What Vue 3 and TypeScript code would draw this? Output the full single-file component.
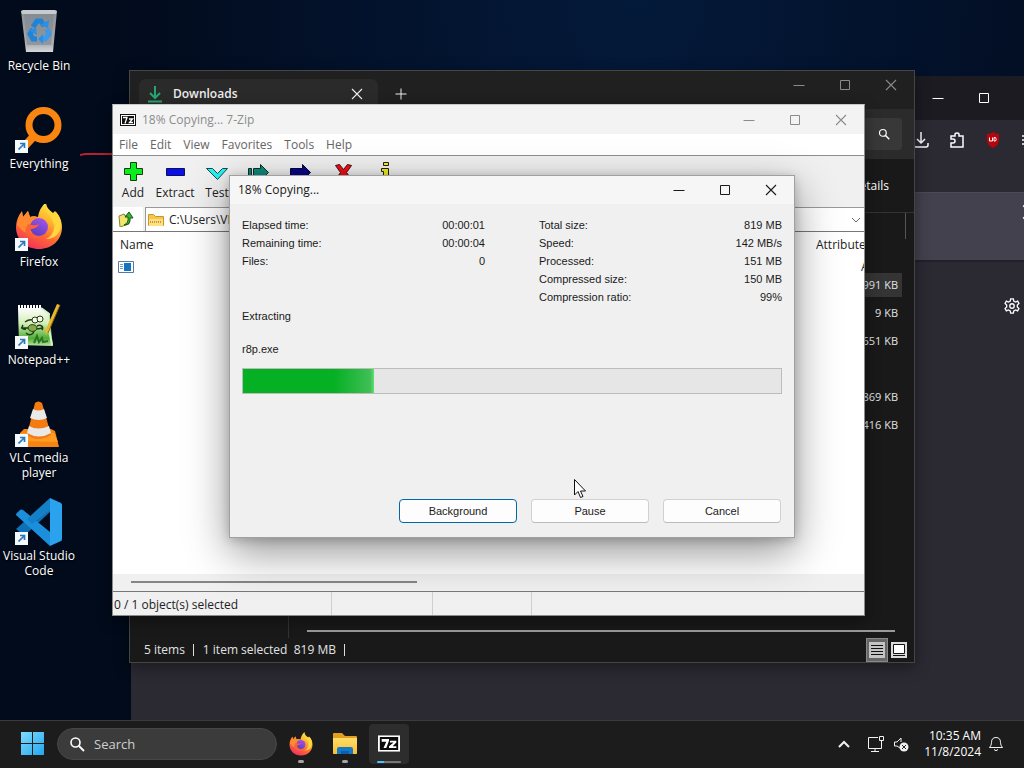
<script setup lang="ts">
import { ref } from 'vue'

interface Shortcut { id: string; label: string }
interface Stat { label: string; value: string }
interface Tool { id: string; name: string; caption: boolean }

const shortcuts: Shortcut[] = [
  { id: 'bin', label: 'Recycle Bin' },
  { id: 'everything', label: 'Everything' },
  { id: 'firefox', label: 'Firefox' },
  { id: 'notepad', label: 'Notepad++' },
  { id: 'vlc', label: 'VLC media player' },
  { id: 'code', label: 'Visual Studio Code' },
]
const menus: string[] = ['File', 'Edit', 'View', 'Favorites', 'Tools', 'Help']
const tools: Tool[] = [
  { id: 'add', name: 'Add', caption: true },
  { id: 'extract', name: 'Extract', caption: true },
  { id: 'test', name: 'Test', caption: true },
  { id: 'copy', name: 'Copy', caption: false },
  { id: 'move', name: 'Move', caption: false },
  { id: 'delete', name: 'Delete', caption: false },
  { id: 'info', name: 'Info', caption: false },
]
const leftStats: Stat[] = [
  { label: 'Elapsed time:', value: '00:00:01' },
  { label: 'Remaining time:', value: '00:00:04' },
  { label: 'Files:', value: '0' },
]
const rightStats: Stat[] = [
  { label: 'Total size:', value: '819 MB' },
  { label: 'Speed:', value: '142 MB/s' },
  { label: 'Processed:', value: '151 MB' },
  { label: 'Compressed size:', value: '150 MB' },
  { label: 'Compression ratio:', value: '99%' },
]
const sizes: string[] = ['991 KB', '9 KB', '651 KB', '', '869 KB', '416 KB']
const path = ref('C:\\Users\\VM')
const query = ref('')
</script>

<template>
  <main class="screen">
    <svg width="0" height="0" class="defs" aria-hidden="true">
      <defs>
        <linearGradient id="gFox" x1="0.8" y1="0" x2="0.3" y2="1">
          <stop offset="0" stop-color="#fff04a" /><stop offset="0.35" stop-color="#ffb62e" />
          <stop offset="0.65" stop-color="#ff6a35" /><stop offset="1" stop-color="#f0305c" />
        </linearGradient>
        <linearGradient id="gGlobe" x1="0.8" y1="0" x2="0.2" y2="1">
          <stop offset="0" stop-color="#a455e8" /><stop offset="1" stop-color="#5a3cc0" />
        </linearGradient>
        <linearGradient id="gBin" x1="0" y1="0" x2="0" y2="1">
          <stop offset="0" stop-color="#8d9298" /><stop offset="0.8" stop-color="#a9adb2" /><stop offset="1" stop-color="#d5d7da" />
        </linearGradient>
        <linearGradient id="gNote" x1="0" y1="0" x2="0" y2="1">
          <stop offset="0" stop-color="#fdfdfd" /><stop offset="0.4" stop-color="#d4efb8" /><stop offset="0.8" stop-color="#4fae35" /><stop offset="1" stop-color="#bfe6a8" />
        </linearGradient>
        <linearGradient id="gWin" x1="0" y1="0" x2="1" y2="1">
          <stop offset="0" stop-color="#7fdcfb" /><stop offset="1" stop-color="#22a6f0" />
        </linearGradient>
        <linearGradient id="gFolder" x1="0" y1="0" x2="0" y2="1">
          <stop offset="0" stop-color="#ffdc6b" /><stop offset="1" stop-color="#fbbf2c" />
        </linearGradient>
        <symbol id="fox" viewBox="0 0 48 48">
          <path d="M24 47C11 47 1 38 1 25c0-6 2-11 6-16l1 6 5-6 2 6c3-1 5-1 8 0 1-7 4-11 8-15 0 5 3 8 7 11l2-2c5 5 7 11 7 16 0 13-10 22-23 22z" fill="url(#gFox)" />
          <path d="M2 23c1-6 3-10 5-13l1 5 5-6 2 6c3-1 6-1 8 1l-3 4c-5 2-4 8-3 12l-8-2z" fill="#ff8a30" />
          <circle cx="24" cy="25" r="9" fill="url(#gGlobe)" />
          <path d="M13 22c3 1 7 2 11 0-1 3-5 5-9 5 1 6 5 8 10 8-6 3-14 0-15-7z" fill="#ff6038" />
          <path d="M30 1c-1 9 8 13 9 22 1 6-3 12-8 14 9 0 15-6 15-15 0-5-2-9-5-12l-2 2C35 9 30 7 30 1z" fill="#ffd63c" />
        </symbol>
        <symbol id="seven" viewBox="0 0 24 18">
          <path d="M0 0h24v18H0z" fill="#fff" /><path d="M2 2h20v14H2z" fill="#0b0b0b" />
          <path d="M4 4h8v2L9 14H6l3-7H4z" fill="#fff" />
          <path d="M13 6h7v2l-4 4h4v2h-8v-2l5-4h-4z" fill="#fff" />
        </symbol>
        <symbol id="min" viewBox="0 0 12 12"><path d="M0.500 6.500h11" stroke="currentColor" /></symbol>
        <symbol id="max" viewBox="0 0 12 12"><path d="M1.500 1.500h9v9h-9z" fill="none" stroke="currentColor" /></symbol>
        <symbol id="close" viewBox="0 0 12 12"><path d="M1 1l10 10M11 1L1 11" stroke="currentColor" stroke-width="1.100" /></symbol>
        <symbol id="glass" viewBox="0 0 16 16"><circle cx="6.500" cy="6.500" r="4.500" fill="none" stroke="currentColor" stroke-width="1.600" /><path d="M10 10l5 5" stroke="currentColor" stroke-width="1.800" /></symbol>
      </defs>
    </svg>

    <section class="desktop">
      <svg class="scribble" viewBox="0 0 34 4" aria-hidden="true"><path d="M1 3l5-1h28" fill="none" stroke="#b81f31" stroke-width="2" /></svg>

      <nav class="shortcuts" aria-label="Desktop">
        <button v-for="s in shortcuts" :key="s.id" type="button" class="shortcut">
          <svg viewBox="0 0 48 48" class="big" aria-hidden="true">
            <g v-if="s.id === 'bin'">
              <path d="M6 3h36l-4 41H11z" fill="url(#gBin)" /><path d="M6 3l2-1h32l2 1-1 3H7z" fill="#c8cbce" />
              <path d="M9 6h30l-3 31H12z" fill="#7d858d" opacity="0.550" />
              <g fill="none" stroke="#1f83d8" stroke-width="5"><path d="M18 19l4-6h4l3 5" /><path d="M32 21l2 5-4 5h-4" stroke="#3a9bea" /><path d="M22 31h-4l-3-5 3-5" /></g>
              <path d="M25 17l8 3 1-8zM28 26l-5 5 5 5zM13 22l8-2 1 7z" fill="#2b8fe3" />
            </g>
            <g v-else-if="s.id === 'everything'">
              <circle cx="28.500" cy="19" r="14.500" fill="none" stroke="#fb8511" stroke-width="7" /><path d="M20 29L7 43" stroke="#fb8511" stroke-width="8" />
            </g>
            <use v-else-if="s.id === 'firefox'" href="#fox" y="-2" />
            <g v-else-if="s.id === 'notepad'">
              <path d="M3 6h24l7 5 4 33-34-1z" fill="url(#gNote)" />
              <path d="M3 5h24" stroke="#fff" stroke-width="4" stroke-dasharray="2 1" />
              <path d="M26 6l8 6-1 10 4 21" stroke="#d7f4c5" stroke-width="2" fill="none" />
              <path d="M10 20c4-3 7-3 10-1M6 26h8l4-2 4 3 6-1M11 31c3 3 7 2 8-2M8 23c-2 3 0 5 3 4M22 24c4-2 7 1 5 4" fill="none" stroke="#243c17" stroke-width="1.500" />
              <circle cx="20" cy="18" r="3" fill="#f7fbe9" stroke="#243c17" /><circle cx="25" cy="17" r="3" fill="#f7fbe9" stroke="#243c17" />
              <path d="M13 26c0-4 8-5 9 0 0 4-8 5-9 0z" fill="#86a94c" stroke="#243c17" />
              <path d="M19 41l3-7 2 6 3-4 1 4 5-1" fill="none" stroke="#2e7422" stroke-width="2" />
              <path d="M45 3L34 28l-3 5-1-4L42 2z" fill="#e9b92c" /><path d="M45 3L33 31" stroke="#8b6512" />
            </g>
            <g v-else-if="s.id === 'vlc'">
              <path d="M5 33l4-4h27l4 2 4 16H7z" fill="#f58410" /><path d="M7 41l-2-8h34l4 9z" fill="#ff9a23" />
              <path d="M20 3q3-3 7 0l9 32q-13 8-24 0z" fill="#f47b12" />
              <path d="M18 9q5 3 11 0l3 9q-8 4-17 0zM14 26q9 5 20 0l2 7q-12 7-24 0z" fill="#e9e9ea" />
            </g>
            <g v-else>
              <path d="M35 1v13L9 38l-8-7z" fill="#0e70b6" /><path d="M1 17q0-2 2-3l2-2q1-1 3 0l27 22v14z" fill="#1b8fdb" />
              <path d="M35 0l11 5q1 1 1 2v34q0 2-1 2l-11 5z" fill="#2aa2ee" /><path d="M35 0v12L17 26l-5-5z" fill="#1480c8" />
            </g>
            <g v-if="s.id !== 'bin'">
              <path d="M0 34h13v13H0z" fill="#f7fafc" /><path d="M3.500 43.500L9 38M5 37.500h4.500V42" fill="none" stroke="#2878bd" stroke-width="1.700" />
            </g>
          </svg>
          <span>{{ s.label }}</span>
        </button>
      </nav>

      <section class="window browser" aria-label="Browser">
        <div class="browser-title">
          <button type="button" class="ctl" aria-label="Minimize"><svg><use href="#min" /></svg></button>
          <button type="button" class="ctl" aria-label="Maximize"><svg><use href="#max" /></svg></button>
        </div>
        <div class="browser-bar">
          <button type="button" aria-label="Downloads"><svg viewBox="0 0 16 16"><path d="M8 0v10M4 7l4 4 4-4M1 11v2q0 2 2 2h10q2 0 2-2v-2" /></svg></button>
          <button type="button" aria-label="Extensions"><svg viewBox="0 0 16 16"><path d="M2 15V11h2q2 0 2-2T4 7H2V4h4V2.500Q6 1 8 1t2 1.500V4h4v11z" /></svg></button>
          <button type="button" aria-label="uBlock"><svg viewBox="0 0 16 16" class="shield"><path d="M8 0q3 2 6 2v6q0 5-6 8-6-3-6-8V2q3 0 6-2z" fill="#b5050d" stroke="none" /><path d="M4.500 5.500V9h3V5.500M9 5.500V9h1.500q1.500-1.500 0-3.500z" /></svg></button>
          <button type="button" class="edge" aria-label="Menu"><svg viewBox="0 0 16 16"><path d="M1 4h14M1 8h14M1 12h14" /></svg></button>
        </div>
        <div class="browser-panel"><svg viewBox="0 0 12 12"><path d="M1 1l10 10M11 1L1 11" /></svg></div>
        <div class="browser-page">
          <button type="button" aria-label="Settings"><svg viewBox="0 0 18 18"><path d="M7.500 1h3l.5 2.500 2 1 2.300-.9 1.500 2.600L15 8v2l1.800 1.800-1.500 2.600-2.300-.9-2 1-.5 2.500h-3L7 14.500l-2-1-2.300.9-1.500-2.600L3 10V8L1.200 6.200l1.500-2.600 2.300.9 2-1z" /><circle cx="9" cy="9" r="2.500" /></svg></button>
        </div>
      </section>

      <section class="window explorer" aria-label="Downloads">
        <div class="ex-title">
          <div class="ex-tab">
            <svg class="dl" viewBox="0 0 16 18" aria-hidden="true"><path d="M8 1v11M3 8l5 5 5-5M1 16.500h14" fill="none" stroke="#27a675" stroke-width="2" /></svg>
            <strong>Downloads</strong>
            <button type="button" aria-label="Close tab"><svg viewBox="0 0 12 12"><use href="#close" /></svg></button>
          </div>
          <button type="button" class="plus" aria-label="New tab"><svg viewBox="0 0 12 12"><path d="M6 0.500v11M0.500 6h11" stroke="currentColor" /></svg></button>
          <div class="controls">
            <button type="button" class="ctl" aria-label="Minimize"><svg><use href="#min" /></svg></button>
            <button type="button" class="ctl" aria-label="Maximize"><svg><use href="#max" /></svg></button>
            <button type="button" class="ctl" aria-label="Close"><svg><use href="#close" /></svg></button>
          </div>
        </div>
        <div class="ex-nav"><button type="button" aria-label="Search Downloads"><svg><use href="#glass" /></svg></button></div>
        <div class="ex-cmd"><button type="button">Details</button></div>
        <div class="ex-body">
          <div class="ex-tree"></div>
          <div class="ex-list">
            <div class="ex-head"></div>
            <ul>
              <li v-for="(size, i) in sizes" :key="i" :class="{ picked: i === 0 }">{{ size }}</li>
            </ul>
            <div class="ex-scroll"></div>
          </div>
        </div>
        <footer class="ex-status">
          <span class="seg">5 items</span>
          <span class="seg">1 item selected&nbsp; 819 MB</span>
          <button type="button" class="view on" aria-label="Details view"><svg viewBox="0 0 16 16"><path d="M0 0h16v16H0z" fill="#c4c4c4" /><path d="M2 3.500h12M2 6.500h12M2 9.500h12M2 12.500h12" stroke="#111" /></svg></button>
          <button type="button" class="view" aria-label="Icon view"><svg viewBox="0 0 16 16"><path d="M0 0h16v16H0z" fill="#dadada" /><path d="M2.500 2.500h11v9h-11z" fill="#fff" stroke="#111" /><path d="M2 13.500h12" stroke="#111" /></svg></button>
        </footer>
      </section>

      <section class="window zip" aria-label="7-Zip">
        <div class="zip-title">
          <svg class="logo" viewBox="0 0 16 12" aria-hidden="true"><path d="M0 0h16v12H0z" fill="#111" /><path d="M1 1h14v10H1z" fill="#fff" /><path d="M2 2h12v8H2z" fill="#111" /><path d="M3 3.500h4L5 9.500M9 5h3.500L9.500 8.500H13" fill="none" stroke="#fff" stroke-width="1.300" /></svg>
          <h1>18% Copying... 7-Zip</h1>
          <div class="controls">
            <button type="button" class="ctl" aria-label="Minimize"><svg><use href="#min" /></svg></button>
            <button type="button" class="ctl" aria-label="Maximize"><svg><use href="#max" /></svg></button>
            <button type="button" class="ctl" aria-label="Close"><svg><use href="#close" /></svg></button>
          </div>
        </div>
        <nav class="menu" aria-label="Menu"><button v-for="m in menus" :key="m" type="button">{{ m }}</button></nav>
        <div class="tools">
          <button v-for="t in tools" :key="t.id" type="button" :aria-label="t.name">
            <svg viewBox="0 0 24 22" aria-hidden="true">
              <path v-if="t.id === 'add'" d="M9.500 1.500h6v6h6v6h-6v6h-6v-6h-6v-6h6z" fill="#08ef1c" stroke="#153c15" />
              <path v-else-if="t.id === 'extract'" d="M3.500 7.500h18v7h-18z" fill="#0910f0" stroke="#11124a" />
              <path v-else-if="t.id === 'test'" d="M1.500 7.500h6l5 5 5-5h5l-10 11z" fill="#26f3f3" stroke="#174a4a" />
              <g v-else-if="t.id === 'copy'" fill="#0f8b7b" stroke="#102f2b"><path d="M1.500 7.500h3v8h-3zM6.500 7.500h7v-4l8 8-8 8v-4h-7z" /></g>
              <path v-else-if="t.id === 'move'" d="M1.500 7.500h12v-4l8 8-8 8v-4h-12z" fill="#0a0785" stroke="#07063b" />
              <path v-else-if="t.id === 'delete'" d="M4.500 4.500l4-1 4 5 4-5 4 1-5 7 5 7-4 2-4-6-4 6-4-2 5-7z" fill="#ee1018" stroke="#4b090c" />
              <g v-else fill="#f4ed1e" stroke="#242105"><path d="M10.500 1.500h5v3h-5zM8.500 7.500h7v9h2v3h-9v-3h2v-6h-2z" /></g>
            </svg>
            <span v-if="t.caption">{{ t.name }}</span>
          </button>
        </div>
        <div class="address">
          <button type="button" class="up" aria-label="Up one level">
            <svg viewBox="0 0 16 16"><path d="M1 5l5-2 1 2 4-1v9l-9 3z" fill="#f2e66e" stroke="#8c8430" /><path d="M6 14q5-2 4-8H7l4-5 4 6h-3q1 7-6 7z" fill="#35b52c" stroke="#17561a" /></svg>
          </button>
          <div class="path">
            <svg viewBox="0 0 16 14" aria-hidden="true"><path d="M0.500 12.500v-11h5l2 2h8v9z" fill="#f6c64a" stroke="#c9962a" /><path d="M1 6h14v7H1z" fill="#ffdf80" /><path d="M2 9h12" stroke="#c09a40" stroke-dasharray="1 1" stroke-width="2" /></svg>
            <input v-model="path" type="text" aria-label="Folder path" />
            <button type="button" aria-label="Show folders"><svg viewBox="0 0 10 6"><path d="M1 1l4 4 4-4" fill="none" stroke="#6a6a6a" /></svg></button>
          </div>
        </div>
        <div class="files">
          <table>
            <thead><tr><th>Name</th><th class="attr">Attributes</th></tr></thead>
            <tbody><tr><td><svg viewBox="0 0 16 12" aria-label="File"><path d="M0.500 0.500h15v11H0.500z" fill="#fff" stroke="#58799b" /><path d="M6 2h7v8H6z" fill="#1474bf" /><path d="M2 3.500h3M2 5.500h3M2 7.500h3" stroke="#6aa1cc" /></svg></td><td class="attr val">A</td></tr></tbody>
          </table>
        </div>
        <div class="zip-scroll"><span></span></div>
        <footer class="zip-status"><span>0 / 1 object(s) selected</span><span></span><span></span><span></span></footer>
      </section>

      <section class="window dialog" role="dialog" aria-labelledby="dlg-title">
        <div class="dlg-title">
          <h2 id="dlg-title">18% Copying...</h2>
          <div class="controls">
            <button type="button" class="ctl" aria-label="Minimize"><svg><use href="#min" /></svg></button>
            <button type="button" class="ctl" aria-label="Maximize"><svg><use href="#max" /></svg></button>
            <button type="button" class="ctl" aria-label="Close"><svg><use href="#close" /></svg></button>
          </div>
        </div>
        <div class="dlg-body">
          <div class="stats">
            <dl><div v-for="s in leftStats" :key="s.label"><dt>{{ s.label }}</dt><dd>{{ s.value }}</dd></div></dl>
            <dl><div v-for="s in rightStats" :key="s.label"><dt>{{ s.label }}</dt><dd>{{ s.value }}</dd></div></dl>
          </div>
          <p>Extracting</p>
          <p class="file"><label for="bar">r8p.exe</label></p>
          <progress id="bar" max="538" value="131"></progress>
          <div class="actions">
            <button type="button" class="primary">Background</button>
            <button type="button">Pause</button>
            <button type="button">Cancel</button>
          </div>
        </div>
      </section>

      <svg class="cursor" viewBox="0 0 13 20" aria-hidden="true"><path d="M0.500 0.500v15.500l3.500-3.500 2.500 6 2.500-1-2.500-5.500h5z" fill="#fff" stroke="#111" /></svg>
    </section>

    <footer class="taskbar">
      <button type="button" class="start" aria-label="Start"><svg viewBox="0 0 24 24"><path d="M0 0h11v11H0zM12 0h11v11H12zM0 12h11v11H0zM12 12h11v11H12z" fill="url(#gWin)" /></svg></button>
      <label class="search"><svg aria-hidden="true"><use href="#glass" /></svg><input v-model="query" type="search" placeholder="Search" aria-label="Search" /></label>
      <div class="apps">
        <button type="button" aria-label="Firefox"><svg><use href="#fox" /></svg><i></i></button>
        <button type="button" aria-label="File Explorer"><svg viewBox="0 0 24 24"><path d="M0 2q0-1 1-1h8l3 3h11q1 0 1 1v16q0 1-1 1H1q-1 0-1-1z" fill="#e0a01e" /><path d="M0 6h24v15q0 1-1 1H1q-1 0-1-1z" fill="url(#gFolder)" /><path d="M4 22v-5q0-2 2-2h12q2 0 2 2v5z" fill="#1479c9" /><path d="M8 22v-3h8v3z" fill="#0e5fa8" /></svg><i></i></button>
        <button type="button" class="active" aria-label="7-Zip"><svg viewBox="0 0 24 18"><use href="#seven" /></svg><i></i></button>
      </div>
      <div class="tray">
        <button type="button" class="chev" aria-label="Hidden icons"><svg viewBox="0 0 12 8"><path d="M1 7l5-5 5 5" stroke-width="2" /></svg></button>
        <button type="button" class="net" aria-label="Network"><svg viewBox="0 0 18 18"><path d="M11 2.500H1.500v11h13V9M8 14v2.500M4 16.500h8M12.500 1.500h4v4h-4zM14.500 6v5" /></svg></button>
        <button type="button" class="vol" aria-label="Volume"><svg viewBox="0 0 16 16"><path d="M7 12L4 10H1.500V6H4l4-4v4" /><circle cx="11" cy="11" r="4.500" fill="#eee" stroke="none" /><path d="M9 9l4 4M13 9l-4 4" class="x" /></svg></button>
        <time datetime="2024-11-08T10:35">10:35 AM<br />11/8/2024</time>
        <button type="button" class="bell" aria-label="Notifications"><svg viewBox="0 0 16 16"><path d="M1.500 11.500q2-2 2-5Q3.500 1.500 8 1.500t4.500 5q0 3 2 5zM6 13.500q2 2.500 4 0" /></svg></button>
      </div>
    </footer>
  </main>
</template>

<style>
html, body { margin: 0; overflow: hidden; }
</style>

<style scoped>
* { box-sizing: border-box; }
.screen { height: 100vh; display: flex; flex-direction: column; font: 12px/16px "Open Sans", "Noto Sans", sans-serif; color: #fff; background: #020b1c; }
.defs { position: absolute; }
button { font: inherit; color: inherit; background: none; border: 0; padding: 0; margin: 0; }
h1, h2, p, dl, dd, ul { margin: 0; padding: 0; font-weight: 400; }
h1 { font-size: 12px; }
svg { display: block; flex: none; }
.desktop { position: relative; flex: 1; min-height: 0; overflow: hidden; background: radial-gradient(ellipse at 62% 0, #041a3a 0, #03122c 30%, #020b1c 58%, #020b1b 100%); }
.scribble { position: absolute; left: 79px; top: 152px; width: 34px; height: 4px; }
.cursor { position: absolute; left: 574px; top: 479px; width: 13px; height: 20px; }
.shortcuts { display: grid; grid-auto-rows: 98px; width: 78px; padding-top: 8px; }
.shortcut { display: flex; flex-direction: column; align-items: center; gap: 2px; font-size: 12px; line-height: 15px; text-shadow: 0 1px 2px #000; }
.big { width: 48px; height: 48px; }

.window { position: absolute; display: flex; flex-direction: column; }
.controls { display: flex; margin-left: auto; }
.ctl { width: 46px; height: 28px; display: grid; place-items: center; }
.ctl svg { width: 12px; height: 12px; }

.browser { left: 131px; right: 0; top: 76px; bottom: 0; background: #2b2a33; overflow: hidden; }
.browser-title { height: 44px; background: #1c1b22; display: flex; justify-content: flex-end; align-items: center; padding-right: 17px; }
.browser-bar { height: 72px; display: flex; justify-content: flex-end; gap: 20px; padding: 12px 0 0; margin-right: -13px; }
.browser-bar button { width: 16px; height: 16px; }
.browser-bar svg, .browser-page svg, .browser-panel svg { width: 16px; height: 16px; fill: none; stroke: #fbfbfe; stroke-width: 1.500; }
.browser-bar .shield { stroke-width: 1; }
.browser-panel { height: 70px; background: #42414d; border-top: 1px solid #4b4a56; border-bottom: 2px solid #22212a; display: flex; justify-content: flex-end; padding-top: 11px; margin-right: -14px; }
.browser-page { display: flex; justify-content: flex-end; padding: 36px 4px 0 0; }

.explorer { left: 129px; right: 109px; top: 70px; bottom: 57px; background: #191919; border: 1px solid #454545; box-shadow: 0 4px 14px rgba(0, 0, 0, 0.4); }
.ex-title { height: 38px; background: #202020; display: flex; align-items: flex-end; color: #eee; }
.ex-title .controls { align-self: flex-start; color: #8a8a8a; }
.ex-tab { width: 239px; height: 30px; margin-left: 9px; padding: 0 15px 0 8px; background: #2a2a2a; border-radius: 7px 7px 0 0; display: flex; align-items: center; gap: 10px; }
.ex-tab strong { flex: 1; font-weight: 600; }
.ex-tab .dl { width: 16px; height: 18px; }
.ex-tab button svg, .plus svg { width: 12px; height: 12px; }
.plus { height: 30px; padding-left: 17px; }
.ex-nav { height: 50px; background: #2b2b2b; display: flex; justify-content: flex-end; align-items: center; padding-right: 12px; }
.ex-nav button { width: 200px; height: 32px; background: #383838; border-radius: 4px; display: flex; justify-content: flex-end; align-items: center; padding-right: 12px; }
.ex-nav svg { width: 12px; height: 12px; }
.ex-cmd { height: 54px; border-bottom: 1px solid #333; display: flex; justify-content: flex-end; align-items: center; padding-right: 25px; }
.ex-body { flex: 1; display: flex; min-height: 0; }
.ex-tree { width: 159px; border-right: 1px solid #333; }
.ex-list { flex: 1; display: flex; flex-direction: column; padding: 0 12px 0 18px; }
.ex-head { height: 26px; margin-right: -4px; border-right: 1px solid #555; }
.ex-list ul { flex: 1; list-style: none; padding-top: 34px; color: #e2e2e2; font-size: 11px; }
.ex-list li { height: 24px; margin-bottom: 4px; padding-right: 4px; line-height: 24px; text-align: right; }
.ex-list .picked { background: #343434; }
.ex-scroll { height: 2px; margin: 0 7px 6px 0; background: #9a9a9a; }
.ex-status { height: 24px; display: flex; align-items: center; padding-left: 14px; color: #e2e2e2; }
.seg { display: flex; align-items: center; gap: 8px; margin-right: 9px; }
.seg::after { content: ""; width: 1px; height: 12px; background: #ddd; }
.view { width: 22px; height: 24px; display: grid; place-items: center; margin-right: 4px; }
.view svg { width: 16px; height: 16px; }
.view.on { margin: 0 0 0 auto; background: #666; border: 1px solid #888; }

.zip { left: 112px; right: 159px; top: 104px; bottom: 104px; color: #222; background: #f0f0f0; border: 1px solid #8b8b8b; border-color: #c8c8c8 #8b8b8b #8b8b8b #8b8b8b; box-shadow: 0 5px 14px rgba(0, 0, 0, 0.4); overflow: hidden; }
.zip-title { height: 29px; background: #f3f3f3; color: #8c8c8c; display: flex; align-items: center; padding-left: 7px; gap: 6px; }
.zip-title .logo { width: 16px; height: 12px; }
.menu { height: 22px; background: #fff; border-bottom: 1px solid #8e8e8e; display: flex; gap: 12px; padding-left: 6px; color: #666; }
.tools { height: 51px; display: flex; align-items: flex-start; padding-top: 5px; margin-left: -1px; }
.tools button { width: 42px; flex: none; display: flex; flex-direction: column; align-items: center; gap: 2px; white-space: nowrap; }
.tools svg { width: 24px; height: 22px; }
.address { height: 25px; display: flex; gap: 2px; border-bottom: 1px solid #777; }
.up { width: 30px; background: #fff; padding-left: 5px; }
.up svg { width: 16px; height: 16px; }
.path { flex: 1; display: flex; align-items: center; background: #fff; border: 1px solid #999; border-right: 0; border-bottom: 0; padding: 0 3px 0 2px; gap: 5px; }
.path > svg { width: 16px; height: 14px; }
.path input { flex: 1; min-width: 0; border: 0; padding: 0; background: none; font: inherit; color: #222; outline: 0; }
.path button svg { width: 10px; height: 6px; }
.files { flex: 1; min-height: 0; background: #fff; overflow: hidden; }
table { width: 100%; table-layout: fixed; border-collapse: collapse; }
th, td { padding: 0 0 0 7px; font-weight: 400; text-align: left; height: 26px; }
td { height: 18px; padding-left: 5px; }
td svg { width: 16px; height: 12px; }
.attr { width: 48px; padding: 0; overflow: hidden; white-space: nowrap; }
.attr.val { padding-left: 45px; }
.zip-scroll { height: 18px; padding: 7px 0 0 18px; background: #f0f0f0; border-bottom: 1px solid #777; }
.zip-scroll span { display: block; width: 39%; height: 2px; background: #868686; }
.zip-status { height: 23px; display: grid; grid-template-columns: 219px 101px 99px 1fr; line-height: 25px; }
.zip-status span { border-right: 1px solid #cfcfcf; padding-left: 1px; }
.zip-status span:last-child { border: 0; }

.dialog { left: 229px; right: 229px; top: 175px; background: #f0f0f0; border: 1px solid #a0a0a0; color: #1a1a1a; box-shadow: 0 14px 40px rgba(0, 0, 0, 0.42), 0 2px 10px rgba(0, 0, 0, 0.2); font: 11px/18px "Liberation Sans", Arial, sans-serif; }
.dlg-title { height: 28px; background: #f6f6f6; display: flex; align-items: center; padding-left: 8px; }
.dlg-title h2 { font: 12px/16px "Open Sans", "Noto Sans", sans-serif; }
.dlg-body { padding: 12px 12px 14px; }
.dlg-body p { margin-top: 1px; }
.dlg-body .file { margin-top: 15px; }
.stats { display: grid; grid-template-columns: 1fr 1fr; gap: 54px; }
.stats dl div { display: flex; justify-content: space-between; }
progress { display: block; appearance: none; width: 100%; height: 26px; margin-top: 10px; border: 1px solid #bcbcbc; background: #e6e6e6; }
progress::-webkit-progress-bar { background: #e6e6e6; }
progress::-webkit-progress-value { background: linear-gradient(90deg, #06b025 0, #06b025 70%, #3fbf55 97%, #5fe070 100%); }
.actions { display: flex; justify-content: flex-end; gap: 14px; margin: 105px 1px 0 0; }
.actions button { width: 118px; height: 24px; background: #fdfdfd; border: 1px solid #d0d0d0; border-bottom-color: #bbb; border-radius: 4px; }
.actions .primary { border-color: #0067a8; }

.taskbar { height: 48px; background: #1c1c1c; border-top: 1px solid #3b3b3f; display: flex; align-items: center; padding: 0 20px 2px 21px; }
.start svg { width: 24px; height: 24px; }
.search { width: 220px; height: 32px; margin-left: 12px; padding: 0 11px; display: flex; align-items: center; gap: 9px; background: #3b3b3b; border: 1px solid #464646; border-radius: 16px; }
.search svg { width: 16px; height: 16px; }
.search input { flex: 1; min-width: 0; border: 0; padding: 0; background: none; outline: 0; color: #ddd; font: 13px/18px "Open Sans", "Noto Sans", sans-serif; }
.search input::placeholder { color: #d0d0d0; opacity: 1; }
.apps { display: flex; gap: 4px; margin-left: 4px; }
.apps button { position: relative; width: 40px; height: 40px; display: grid; place-items: center; border-radius: 4px; }
.apps .active { background: #2d2d2d; }
.apps svg { width: 24px; height: 24px; }
.apps .active svg { width: 22px; height: 17px; }
.apps i { position: absolute; bottom: 1px; left: 17px; width: 6px; height: 3px; border-radius: 2px; background: #a5a5a5; }
.apps .active i { left: 8px; width: 24px; height: 2px; background: linear-gradient(90deg, #4cc2ff 30%, #777 30%); }
.tray { margin-left: auto; display: flex; align-items: center; }
.tray svg { fill: none; stroke: #f2f2f2; }
.chev svg { width: 12px; height: 8px; }
.net { margin-left: 17px; }
.net svg { width: 18px; height: 18px; }
.vol { margin-left: 8px; }
.vol svg { width: 16px; height: 16px; }
.x { stroke: #222; }
time { margin-left: 15px; text-align: right; font-size: 12px; line-height: 16px; }
.bell { margin-left: 7px; }
.bell svg { width: 16px; height: 16px; }
</style>
